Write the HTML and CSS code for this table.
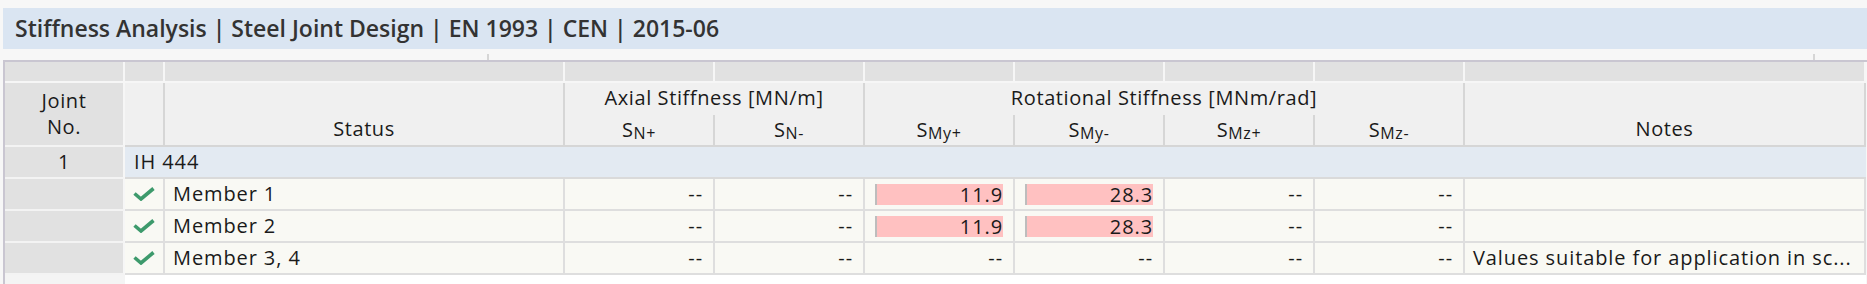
FILE: index.html
```html
<!DOCTYPE html>
<html lang="en">
<head>
<meta charset="utf-8">
<title>Stiffness Analysis</title>
<link rel="stylesheet" href="styles.css">
</head>
<body>
<div class="titlebar">Stiffness Analysis | Steel Joint Design | EN 1993 | CEN | 2015-06</div>
<div class="strip"><span class="tick tick-a"></span><span class="tick tick-b"></span></div>
<div class="grid">
  <!-- header row 1 -->
  <div class="h1 c-joint"></div>
  <div class="h1"></div>
  <div class="h1"></div>
  <div class="h1"></div>
  <div class="h1"></div>
  <div class="h1"></div>
  <div class="h1"></div>
  <div class="h1"></div>
  <div class="h1"></div>
  <div class="h1"></div>

  <!-- header row 2 -->
  <div class="hjoint">Joint<br>No.</div>
  <div class="hcell hcheck"></div>
  <div class="hcell hbottom hstatus">Status</div>
  <div class="hgroup hgroup-axial">Axial Stiffness [MN/m]</div>
  <div class="hgroup hgroup-rot">Rotational Stiffness [MNm/rad]</div>
  <div class="hcell hbottom hnotes">Notes</div>
  <div class="hsub">S<sub>N+</sub></div>
  <div class="hsub hsub-end">S<sub>N-</sub></div>
  <div class="hsub">S<sub>My+</sub></div>
  <div class="hsub">S<sub>My-</sub></div>
  <div class="hsub">S<sub>Mz+</sub></div>
  <div class="hsub hsub-end">S<sub>Mz-</sub></div>

  <!-- group row -->
  <div class="jcell">1</div>
  <div class="grouprow">IH 444</div>

  <!-- data rows -->
  <div class="jcell"></div>
  <div class="dcell check"><svg width="22" height="14" viewBox="0 0 22 14"><path d="M1.5 6.5 L8 12 L20.5 1.5" fill="none" stroke="#3d9a6c" stroke-width="3.6" stroke-linejoin="miter"/></svg></div>
  <div class="dcell name">Member 1</div>
  <div class="dcell num">--</div>
  <div class="dcell num">--</div>
  <div class="dcell num"><span class="bar">11.9</span></div>
  <div class="dcell num"><span class="bar">28.3</span></div>
  <div class="dcell num">--</div>
  <div class="dcell num">--</div>
  <div class="dcell note"></div>

  <div class="jcell"></div>
  <div class="dcell check"><svg width="22" height="14" viewBox="0 0 22 14"><path d="M1.5 6.5 L8 12 L20.5 1.5" fill="none" stroke="#3d9a6c" stroke-width="3.6" stroke-linejoin="miter"/></svg></div>
  <div class="dcell name">Member 2</div>
  <div class="dcell num">--</div>
  <div class="dcell num">--</div>
  <div class="dcell num"><span class="bar">11.9</span></div>
  <div class="dcell num"><span class="bar">28.3</span></div>
  <div class="dcell num">--</div>
  <div class="dcell num">--</div>
  <div class="dcell note"></div>

  <div class="jcell"></div>
  <div class="dcell check"><svg width="22" height="14" viewBox="0 0 22 14"><path d="M1.5 6.5 L8 12 L20.5 1.5" fill="none" stroke="#3d9a6c" stroke-width="3.6" stroke-linejoin="miter"/></svg></div>
  <div class="dcell name">Member 3, 4</div>
  <div class="dcell num">--</div>
  <div class="dcell num">--</div>
  <div class="dcell num">--</div>
  <div class="dcell num">--</div>
  <div class="dcell num">--</div>
  <div class="dcell num">--</div>
  <div class="dcell note">Values suitable for application in sc...</div>

  <!-- filler -->
  <div class="fill-joint"></div>
  <div class="fill-rest"></div>
</div>
</body>
</html>
```

FILE: styles.css
```css
html, body {
  margin: 0;
  padding: 0;
  height: 284px;
  overflow: hidden;
}

body {
  background: #f7f7f7;
  font-family: "Open Sans", "Noto Sans", sans-serif;
  font-size: 20px;
  color: #1a1a1a;
}

.titlebar {
  margin: 8px 0 0 3px;
  height: 41px;
  background: #dae5f2;
  color: #333333;
  font-weight: 600;
  font-size: 23px;
  line-height: 41px;
  padding-left: 12px;
  white-space: nowrap;
}

.strip {
  height: 11px;
  display: flex;
  align-items: flex-end;
}

.tick {
  display: block;
  width: 2px;
  height: 6px;
  background: #d6d6d6;
}

.tick-a { margin-left: 487px; }
.tick-b { margin-left: 1324px; }

.grid {
  margin-left: 3px;
  border-left: 2px solid #c9c6d1;
  border-top: 2px solid #c9c6d1;
  display: grid;
  grid-template-columns: 120px 40px 400px repeat(6, 150px) 401px;
  grid-template-rows: 21px 32px 32px 32px 32px 32px 32px 12px;
  box-sizing: border-box;
  letter-spacing: 0.6px;
}

.grid > div {
  box-sizing: border-box;
  min-width: 0;
}

/* header row 1 */
.h1 {
  background: #e1e1e1;
  border-right: 2px solid #f6f6f6;
  border-bottom: 2px solid #f6f6f6;
}

/* header row 2 */
.hjoint {
  grid-row: 2 / span 2;
  grid-column: 1;
  background: #e1e1e1;
  border-right: 2px solid #f6f6f6;
  border-bottom: 2px solid #f3f3f3;
  display: flex;
  align-items: center;
  justify-content: center;
  text-align: center;
  line-height: 26px;
  padding-bottom: 1px;
}

.hcell {
  grid-row: 2 / span 2;
  background: #f0f0f0;
  border-right: 2px solid #d6d6d6;
  border-bottom: 2px solid #d6d6d6;
}

.hcheck { grid-column: 2; }

.hbottom {
  display: flex;
  align-items: flex-end;
  justify-content: center;
  line-height: 30px;
  padding-bottom: 1px;
}

.hstatus { grid-column: 3; }
.hnotes { grid-column: 10; }

.hgroup {
  grid-row: 2;
  background: #f0f0f0;
  border-right: 2px solid #d6d6d6;
  text-align: center;
  line-height: 28px;
  padding-top: 1px;
  white-space: nowrap;
}

.hgroup-axial { grid-column: 4 / span 2; }
.hgroup-rot { grid-column: 6 / span 4; }

.hsub {
  grid-row: 3;
  background: #f0f0f0;
  border-right: 2px solid #d6d6d6;
  border-bottom: 2px solid #d6d6d6;
  text-align: center;
  line-height: 30px;
  white-space: nowrap;
}

.hsub sub {
  font-size: 16px;
  vertical-align: -2px;
  line-height: 0;
}

/* joint column body cells */
.jcell {
  grid-column: 1;
  background: #e1e1e1;
  border-right: 2px solid #f6f6f6;
  border-bottom: 2px solid #f3f3f3;
  text-align: center;
  line-height: 30px;
}

.grouprow {
  grid-column: 2 / span 9;
  background: #e3eaf2;
  border-bottom: 2px solid #dadada;
  padding-left: 9px;
  line-height: 30px;
  letter-spacing: 0.9px;
}

.dcell {
  background: #f9f9f4;
  border-right: 2px solid #dedede;
  border-bottom: 2px solid #dedede;
  line-height: 30px;
  white-space: nowrap;
  overflow: hidden;
  letter-spacing: 0.9px;
}

.check {
  display: flex;
  align-items: center;
  padding-left: 8px;
}

.check svg { display: block; }

.name { padding-left: 8px; }

.num {
  text-align: right;
  padding: 0 10px;
  display: flex;
  align-items: center;
  justify-content: flex-end;
}

.bar {
  display: block;
  width: 100%;
  height: 21px;
  line-height: 21px;
  background: #ffc1c1;
  border-left: 2px solid #bdbdbd;
  box-sizing: border-box;
  text-align: right;
}

.note { padding-left: 8px; }

.fill-joint {
  grid-column: 1;
  background: #f4f4f4;
}

.fill-rest {
  grid-column: 2 / span 9;
  background: #ffffff;
}
```
